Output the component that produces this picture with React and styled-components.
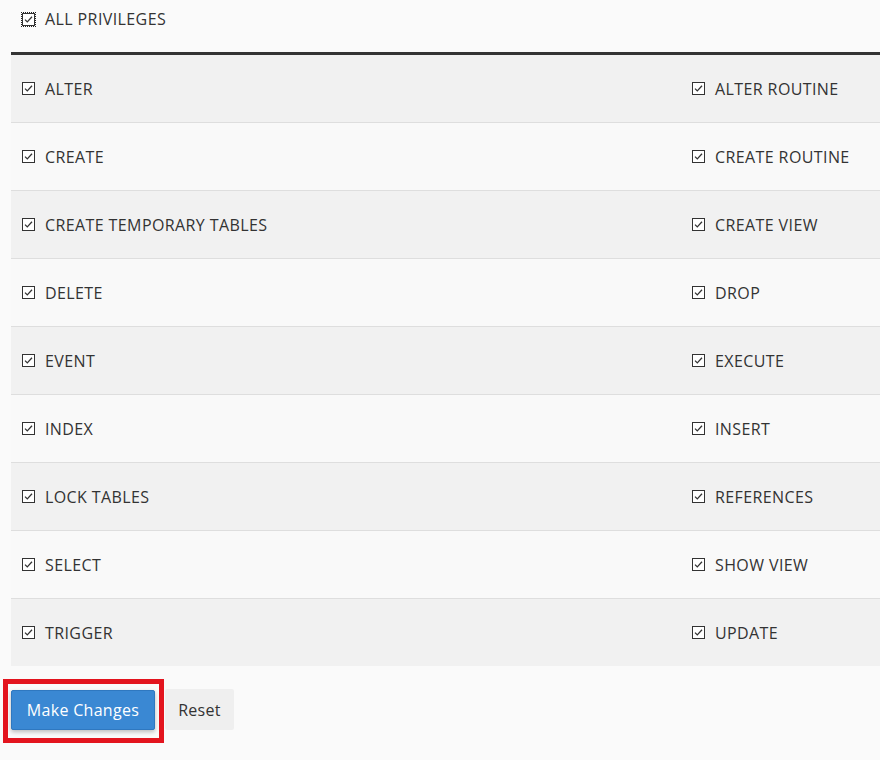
import React from 'react';
import styled, { createGlobalStyle } from 'styled-components';

const GlobalStyle = createGlobalStyle`
  html, body {
    margin: 0;
    padding: 0;
    background: #fafafa;
    overflow: hidden;
  }
  body {
    font-family: "Open Sans", "DejaVu Sans", sans-serif;
    color: #333;
  }
`;

const PRIVILEGES = [
    ['ALTER', 'ALTER ROUTINE'],
    ['CREATE', 'CREATE ROUTINE'],
    ['CREATE TEMPORARY TABLES', 'CREATE VIEW'],
    ['DELETE', 'DROP'],
    ['EVENT', 'EXECUTE'],
    ['INDEX', 'INSERT'],
    ['LOCK TABLES', 'REFERENCES'],
    ['SELECT', 'SHOW VIEW'],
    ['TRIGGER', 'UPDATE'],
];

function CheckIcon() {
    return (
        <svg width="13" height="13" viewBox="0 0 13 13">
            <rect x="0.5" y="0.5" width="12" height="12" fill="#fff" stroke="#333" strokeWidth="1" />
            <path d="M3 6.6 L5.3 8.9 L10 3.8" fill="none" stroke="#333" strokeWidth="1.3" />
        </svg>
    );
}

function Check({ label, focused }) {
    return (
        <Label>
            <Box $focused={focused}><CheckIcon /></Box>
            {label}
        </Label>
    );
}

function App() {
    return (
        <Page>
            <GlobalStyle />
            <Header>
                <Check label="ALL PRIVILEGES" focused />
            </Header>
            <Table>
                {PRIVILEGES.map(([left, right], i) => (
                    <Row key={left} $odd={i % 2 === 0} $first={i === 0}>
                        <Cell><Check label={left} /></Cell>
                        <Cell><Check label={right} /></Cell>
                    </Row>
                ))}
            </Table>
            <Actions>
                <Highlight>
                    <PrimaryButton type="button">Make Changes</PrimaryButton>
                    <RedFrame />
                </Highlight>
                <PlainButton type="button">Reset</PlainButton>
            </Actions>
        </Page>
    );
}

export default App;

const Page = styled.div`
  padding-left: 11px;
  min-height: 760px;
`;

const Header = styled.div`
  height: 52px;
  box-sizing: border-box;
  padding: 8px 0 0 11px;
`;

const Label = styled.label`
  display: flex;
  align-items: center;
  gap: 10px;
  font-size: 16px;
  line-height: 22px;
  letter-spacing: 0.4px;
  color: #333;
  white-space: nowrap;
`;

const Box = styled.span`
  display: inline-flex;
  width: 13px;
  height: 13px;
  outline: ${p => (p.$focused ? '1px dotted #222' : 'none')};
  outline-offset: 0;
`;

const Table = styled.div`
  border-top: 3px solid #333;
`;

const Row = styled.div`
  display: grid;
  grid-template-columns: 670px 1fr;
  height: ${p => (p.$first ? '67px' : '68px')};
  box-sizing: border-box;
  background: ${p => (p.$odd ? '#f1f1f1' : '#f9f9f9')};
  border-top: ${p => (p.$first ? 'none' : '1px solid #dedede')};
`;

const Cell = styled.div`
  display: flex;
  align-items: center;
  padding-left: 11px;
`;

const Actions = styled.div`
  display: flex;
  align-items: flex-start;
  margin-top: 24px;
`;

const Highlight = styled.div`
  position: relative;
`;

const RedFrame = styled.div`
  position: absolute;
  top: -11px;
  left: -8px;
  right: -9px;
  bottom: -13px;
  border: 5px solid #e3141e;
  pointer-events: none;
`;

const PrimaryButton = styled.button`
  width: 144px;
  height: 40px;
  padding: 0;
  border: 1px solid #2f78c0;
  border-radius: 2px;
  background: #3a88d3;
  color: #fff;
  font-family: "Open Sans", "DejaVu Sans", sans-serif;
  font-size: 16px;
  letter-spacing: 0.3px;
  box-shadow: 0 2px 4px rgba(0, 0, 0, 0.25);
  cursor: pointer;
`;

const PlainButton = styled.button`
  margin-left: 10px;
  margin-top: -1px;
  width: 69px;
  height: 41px;
  padding: 0;
  border: none;
  border-radius: 2px;
  background: #efefef;
  color: #333;
  font-family: "Open Sans", "DejaVu Sans", sans-serif;
  font-size: 16px;
  letter-spacing: 0.3px;
  cursor: pointer;
`;
